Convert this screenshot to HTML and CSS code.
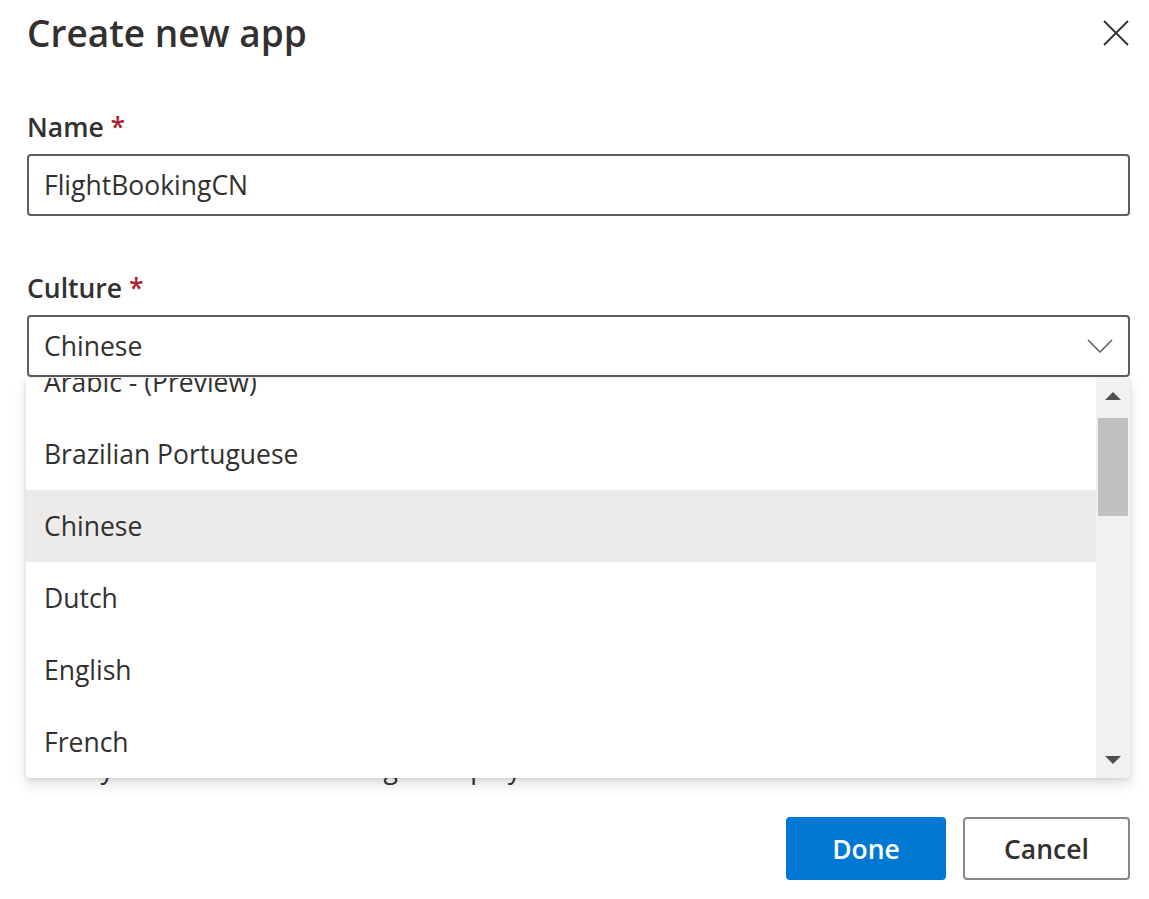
FILE: index.html
```html
<!DOCTYPE html>
<html lang="en">
<head>
<meta charset="utf-8">
<title>Create new app</title>
<link rel="stylesheet" href="styles.css">
</head>
<body>
<div class="dialog">
  <div class="header">
    <h1 class="title">Create new app</h1>
    <button class="close" aria-label="Close">
      <svg viewBox="0 0 26 26" width="26" height="26"><path d="M1 1 L25 25 M25 1 L1 25" stroke="#323130" stroke-width="1.8" fill="none"/></svg>
    </button>
  </div>

  <div class="field name">
    <label class="label">Name <span class="req">*</span></label>
    <div class="input">FlightBookingCN</div>
  </div>

  <div class="field culture">
    <label class="label">Culture <span class="req">*</span></label>
    <div class="dropdown-wrap">
      <div class="input select">
        <span>Chinese</span>
        <svg class="chev" viewBox="0 0 26 14" width="26" height="14"><path d="M1 1 L13 13 L25 1" stroke="#605e5c" stroke-width="1.5" fill="none"/></svg>
      </div>
      <div class="callout">
        <div class="options">
          <div class="options-inner">
            <div class="option">Arabic - (Preview)</div>
            <div class="option">Brazilian Portuguese</div>
            <div class="option selected">Chinese</div>
            <div class="option">Dutch</div>
            <div class="option">English</div>
            <div class="option">French</div>
          </div>
        </div>
        <div class="scrollbar">
          <div class="arrow up"></div>
          <div class="track"><div class="thumb"></div></div>
          <div class="arrow down"></div>
        </div>
      </div>
    </div>
  </div>

  <p class="note">Today this is a culture setting in display</p>

  <div class="footer">
    <button class="btn primary">Done</button>
    <button class="btn">Cancel</button>
  </div>
</div>
</body>
</html>
```

FILE: styles.css
```css
* { box-sizing: border-box; }
html, body { margin: 0; background: #ffffff; }
body {
  font-family: "Open Sans", "Noto Sans", sans-serif;
  color: #323130;
  font-size: 26.5px;
}
.dialog {
  padding: 0 19px 0 27px;
  width: 1149px;
}
.header {
  display: flex;
  justify-content: space-between;
  align-items: center;
  height: 66px;
}
.title {
  margin: 0;
  font-size: 37px;
  font-weight: 600;
  line-height: 66px;
}
.close {
  border: 0;
  background: none;
  padding: 0;
  margin-right: 1px;
  width: 26px;
  height: 26px;
  display: flex;
}
.field { display: flex; flex-direction: column; }
.name { margin-top: 41px; }
.label {
  font-weight: 600;
  line-height: 40px;
  margin-bottom: 7px;
}
.req { color: #a4262c; }
.input {
  height: 62px;
  border: 2px solid #605e5c;
  border-radius: 4px;
  padding: 0 16px 0 15px;
  display: flex;
  align-items: center;
}
.culture { margin-top: 52px; }
.dropdown-wrap { position: relative; }
.select { justify-content: space-between; padding-right: 15px; }
.chev { display: block; }
.callout {
  position: absolute;
  left: -1px;
  right: 0;
  top: 63px;
  height: 400px;
  background: #fff;
  display: flex;
  border-radius: 0 0 3px 3px;
  box-shadow: 0 6px 14px rgba(0,0,0,0.13), 0 1px 4px rgba(0,0,0,0.11);
  z-index: 2;
}
.options { flex: 1; overflow: hidden; }
.options-inner { margin-top: -32px; }
.option {
  height: 72px;
  display: flex;
  align-items: center;
  padding-left: 18px;
}
.option.selected { background: #edebe9; }
.scrollbar {
  width: 34px;
  background: #f1f1f1;
  display: flex;
  flex-direction: column;
  align-items: center;
}
.arrow { width: 0; height: 0; border-left: 8.5px solid transparent; border-right: 8.5px solid transparent; }
.arrow.up { border-bottom: 8px solid #505050; margin-top: 14px; }
.arrow.down { border-top: 8px solid #505050; margin-bottom: 14px; }
.track { flex: 1; width: 100%; padding: 18px 2px 0; }
.thumb { height: 98px; background: #c1c1c1; }
.note {
  margin: 371px 0 0;
  padding-left: 12px;
  line-height: 40px;
}
.footer {
  display: flex;
  justify-content: flex-end;
  gap: 17px;
  margin-top: 29px;
}
.btn {
  font-family: inherit;
  font-size: 26.5px;
  font-weight: 600;
  color: #323130;
  height: 63px;
  border: 2px solid #8a8886;
  border-radius: 4px;
  background: #fff;
  padding: 0;
  width: 167px;
}
.btn.primary {
  background: #0078d4;
  border-color: #0078d4;
  color: #fff;
  width: 160px;
}
```
